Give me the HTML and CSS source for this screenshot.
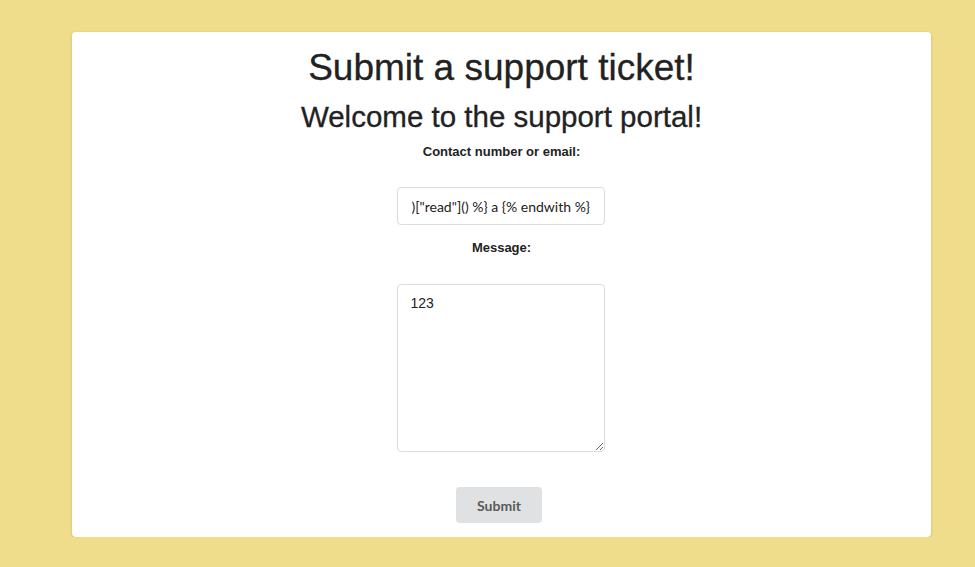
FILE: index.html
```html
<!DOCTYPE html>
<html lang="en">
<head>
    <meta charset="UTF-8">
    <title>Support</title>
    <link rel="stylesheet" href="styles.css">
</head>
<body>
<div class="card">
    <h1>Submit a support ticket!</h1>
    <h2>Welcome to the support portal!</h2>
    <form class="ticket-form">
        <label for="contact">Contact number or email:</label>
        <input type="text" id="contact" class="field" value=')[&quot;read&quot;]() %} a {% endwith %}'>
        <label for="message" class="msg-label">Message:</label>
        <textarea id="message" class="field area">123</textarea>
        <button type="button" class="submit-btn">Submit</button>
    </form>
</div>
</body>
</html>
```

FILE: styles.css
```css
body {
    margin: 0;
    background-color: #efdd8c;
    font-family: 'Liberation Sans', Arial, sans-serif;
    color: #222;
}

.card {
    background-color: #fff;
    margin: 32px 44px 0 72px;
    height: 505px;
    box-sizing: border-box;
    border-radius: 4px;
    box-shadow: 0 1px 3px rgba(0, 0, 0, 0.18);
    padding-top: 14px;
    text-align: center;
}

.card h1 {
    font-size: 37px;
    font-weight: normal;
    margin: 0;
    line-height: 44px;
    -webkit-text-stroke: 0.3px #222;
}

.card h2 {
    font-size: 29.5px;
    font-weight: normal;
    margin: 9px 0 0;
    line-height: 36px;
    -webkit-text-stroke: 0.3px #222;
}

.ticket-form {
    display: flex;
    flex-direction: column;
    align-items: center;
}

.ticket-form label {
    font-size: 13px;
    font-weight: bold;
    margin-top: 9px;
    line-height: 16px;
}

.field {
    width: 208px;
    height: 38px;
    box-sizing: border-box;
    border: 1px solid #dcdcdc;
    border-radius: 4px;
    margin: 27px 2px 0 0;
    padding: 0 14px;
    font-family: 'Lato', sans-serif;
    font-size: 14px;
    color: #222;
    text-align: right;
    outline: none;
}

.ticket-form .msg-label {
    margin-top: 15px;
}

.field.area {
    height: 168px;
    margin-top: 28px;
    margin-bottom: 35px;
    padding: 10px 13px;
    font-family: 'Liberation Sans', Arial, sans-serif;
    text-align: left;
    resize: vertical;
}

.submit-btn {
    width: 86px;
    height: 36px;
    margin-right: 5px;
    border: none;
    border-radius: 4px;
    background-color: #e0e1e2;
    color: #5a5a5a;
    font-family: 'Lato', sans-serif;
    font-weight: bold;
    font-size: 14px;
}
```
